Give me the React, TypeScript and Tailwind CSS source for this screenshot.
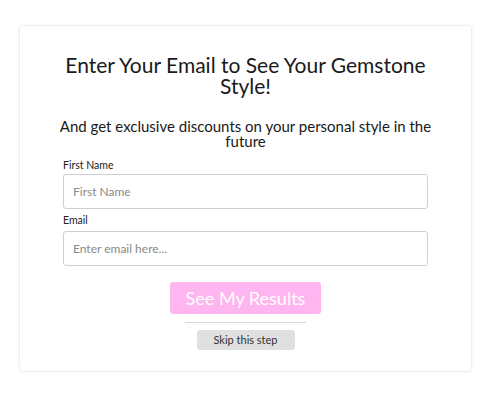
export default function App() {
  return (
    <div className="min-h-[402px] w-[500px] bg-white pt-[26px] pl-[20px] font-['Lato','Liberation_Sans',sans-serif]">
      <div className="flex w-[451px] flex-col items-center rounded-[3px] bg-white px-[43px] pb-[21px] pt-[28px] shadow-[0_0_3px_rgba(0,0,0,0.18)]">
        <h1 className="w-[370px] text-center text-[21px] leading-[21px] text-[#1a1a1a]">
          Enter Your Email to See Your Gemstone Style!
        </h1>
        <p className="mt-[23px] w-[380px] text-center text-[15px] leading-[15px] text-[#1a1a1a]">
          And get exclusive discounts on your personal style in the future
        </p>
        <div className="mt-[9px] flex w-full flex-col">
          <label className="text-[10.5px] leading-[14px] text-[#222]">First Name</label>
          <input
            className="mt-[2px] h-[35px] w-full rounded-[3px] border border-[#cfcfcf] px-[9px] text-[12px] text-[#333] outline-none placeholder:text-[#8a8a8a]"
            placeholder="First Name"
          />
          <label className="mt-[4px] text-[10.5px] leading-[14px] text-[#222]">Email</label>
          <input
            className="mt-[4px] h-[35px] w-full rounded-[3px] border border-[#cfcfcf] px-[9px] text-[12px] text-[#333] outline-none placeholder:text-[#8a8a8a]"
            placeholder="Enter email here..."
          />
        </div>
        <button className="mt-[16px] h-[32px] w-[151px] rounded-[3px] bg-[#ffb5ef] text-[18px] text-white">
          See My Results
        </button>
        <div className="mt-[8px] h-px w-[121px] bg-[#d8d8d8]" />
        <button className="mt-[7px] h-[20px] w-[98px] rounded-[3px] bg-[#e0e0e0] text-[11px] text-[#333]">
          Skip this step
        </button>
      </div>
    </div>
  );
}
